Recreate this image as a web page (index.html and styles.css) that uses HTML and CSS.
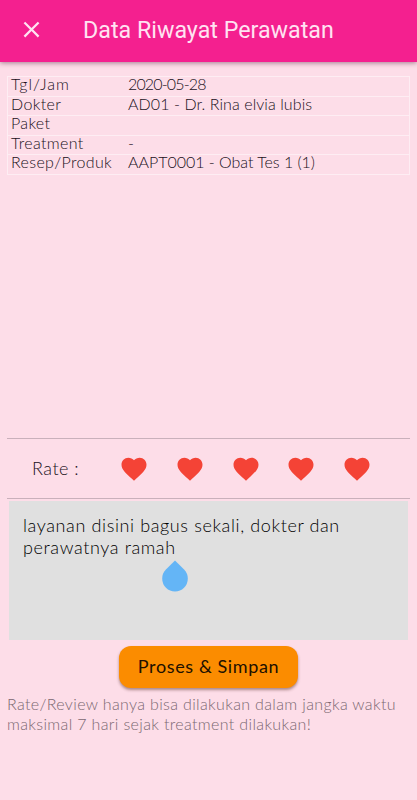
FILE: index.html
```html
<!DOCTYPE html>
<html lang="id">
<head>
<meta charset="utf-8">
<title>Data Riwayat Perawatan</title>
<link rel="stylesheet" href="styles.css">
</head>
<body>
<svg width="0" height="0" class="defs"><symbol id="heart" viewBox="0 0 24 24"><path d="M12 21.35l-1.45-1.32C5.4 15.36 2 12.28 2 8.5 2 5.42 4.42 3 7.5 3c1.74 0 3.41.81 4.5 2.09C13.09 3.81 14.76 3 16.5 3 19.58 3 22 5.42 22 8.5c0 3.78-3.4 6.86-8.55 11.54L12 21.35z"/></symbol></svg>
<header class="bar">
  <svg class="close" viewBox="0 0 24 24"><path d="M19 6.41L17.59 5 12 10.59 6.41 5 5 6.41 10.59 12 5 17.59 6.41 19 12 13.41 17.59 19 19 17.59 13.41 12z"/></svg>
  <h1>Data Riwayat Perawatan</h1>
</header>
<main>
  <dl class="details">
    <div><dt class="wide">Tgl/Jam</dt><dd class="date">2020-05-28</dd></div>
    <div><dt>Dokter</dt><dd class="doctor">AD01 - Dr. Rina elvia lubis</dd></div>
    <div><dt>Paket</dt><dd></dd></div>
    <div><dt>Treatment</dt><dd>-</dd></div>
    <div><dt>Resep/Produk</dt><dd class="product">AAPT0001 - Obat Tes 1 (1)</dd></div>
  </dl>
  <section class="rate">
    <span class="rate-label">Rate :</span>
    <div class="hearts">
      <svg><use href="#heart"/></svg>
      <svg><use href="#heart"/></svg>
      <svg><use href="#heart"/></svg>
      <svg><use href="#heart"/></svg>
      <svg><use href="#heart"/></svg>
    </div>
  </section>
  <div class="review">layanan disini bagus sekali, dokter dan<br>perawatnya ramah
    <svg class="handle" viewBox="0 0 26 32"><path d="M13 0.5L22.1 9.6A12.8 12.8 0 1 1 3.9 9.6Z"/></svg>
  </div>
  <button class="save">Proses &amp; Simpan</button>
  <p class="note">Rate/Review hanya bisa dilakukan dalam jangka waktu<br>maksimal 7 hari sejak treatment dilakukan!</p>
</main>
</body>
</html>
```
FILE: styles.css
```css
* { box-sizing: border-box; }
body {
  margin: 0;
  height: 800px;
  overflow: hidden;
  background: #fddde8;
  color: #20101a;
  font-family: Lato, "Liberation Sans", sans-serif;
  font-weight: 300;
}
.defs { position: absolute; }
.bar {
  height: 62px;
  display: flex;
  align-items: center;
  padding: 0 20px;
  background: #f4208f;
  box-shadow: 0 1px 5px rgba(60, 0, 30, .45);
}
.close { width: 27px; height: 27px; margin: -3px 38px 0 -2px; fill: #ffe3f2; }
h1 {
  margin: -2px 0 0;
  font: 400 23.25px/28px Roboto, sans-serif;
  color: #ffe3f2;
  white-space: nowrap;
}
main { padding: 14px 7px 0; display: flex; flex-direction: column; }
.details {
  margin: 0;
  height: 99px;
  border: 1px solid #feedf3;
  border-width: 1px 1px 0;
  display: grid;
  grid-template-rows: repeat(5, 1fr);
  font-size: 16px;
  line-height: 14px;
  letter-spacing: .35px;
}
.details div {
  display: grid;
  grid-template-columns: 117px 1fr;
  padding-left: 3px;
  border-bottom: 1px solid #feedf3;
  white-space: nowrap;
}
dt, dd { margin: 0; }
.wide { letter-spacing: 1px; }
.date { letter-spacing: -.85px; }
.doctor { letter-spacing: .08px; }
.product { letter-spacing: -.02px; }
.rate {
  margin-top: 263px;
  height: 61px;
  border: 1px solid #c9b0bb;
  border-width: 1px 0;
  display: flex;
  align-items: center;
  padding-left: 25px;
}
.rate-label { width: 87px; margin-top: -2px; font-size: 18px; letter-spacing: .5px; }
.hearts { display: flex; gap: 25.8px; }
.hearts svg { width: 30px; height: 30px; fill: #f44336; }
.review {
  position: relative;
  margin: 2px 2px 0;
  height: 139px;
  padding: 13px 14px;
  background: #e0e0e0;
  color: #000;
  font-size: 18px;
  line-height: 22px;
  letter-spacing: .62px;
  white-space: nowrap;
}
.handle { position: absolute; left: 153px; top: 59px; width: 26px; height: 32px; fill: #64b5f6; }
.save {
  align-self: center;
  width: 179px;
  height: 42px;
  margin: 6px 0 0;
  padding: 0 0 2px;
  border: 0;
  border-radius: 12px;
  background: #fb8c00;
  color: #201000;
  font: 400 18px/40px Lato, sans-serif;
  letter-spacing: .62px;
  box-shadow: 0 2px 3px rgba(70, 30, 20, .45);
}
.note {
  margin: 6px 0 0;
  color: #7b6871;
  font-size: 16px;
  line-height: 20px;
  letter-spacing: .35px;
  white-space: nowrap;
}
```
